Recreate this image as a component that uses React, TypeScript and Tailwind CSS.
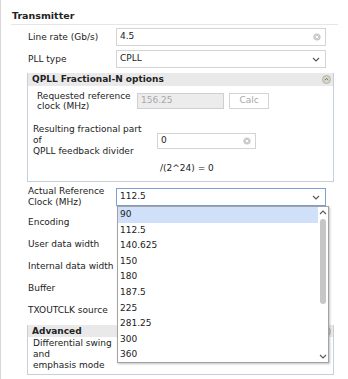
import React from 'react'

const FONT = "font-['DejaVu_Sans',_'Liberation_Sans',_sans-serif]"

const CLOCKS = ['90', '112.5', '140.625', '150', '180', '187.5', '225', '281.25', '300', '360']

function ClearIcon() {
  return (
    <svg width="8" height="8" viewBox="0 0 8 8">
      <circle cx="4" cy="4" r="3.6" fill="#c9c9c9" />
      <path d="M2.6 2.6 L5.4 5.4 M5.4 2.6 L2.6 5.4" stroke="#fff" strokeWidth="1" />
    </svg>
  )
}

function Chevron({ up = false }: { up?: boolean }) {
  return (
    <svg width="8" height="5" viewBox="0 0 8 5">
      <path d={up ? 'M1 4 L4 1 L7 4' : 'M1 1 L4 4 L7 1'} fill="none" stroke="#555" strokeWidth="1.1" />
    </svg>
  )
}

function CollapseIcon() {
  return (
    <svg width="9" height="9" viewBox="0 0 9 9">
      <circle cx="4.5" cy="4.5" r="4" fill="#d6d6cc" stroke="#a8a89c" strokeWidth="0.8" />
      <path d="M2.8 5.2 L4.5 3.4 L6.2 5.2" fill="none" stroke="#77776c" strokeWidth="1" />
    </svg>
  )
}

function Row({ label, children }: { label: React.ReactNode; children?: React.ReactNode }) {
  return (
    <div className="flex h-[18px] items-center">
      <div className="w-[89px] pl-[1px] leading-[11px]">{label}</div>
      {children}
    </div>
  )
}

function TextInput({ value }: { value: string }) {
  return (
    <div className="flex h-[18px] w-[210px] items-center justify-between border border-[#d4d4d4] bg-white pl-[3px] pr-[4px]">
      <span>{value}</span>
      <ClearIcon />
    </div>
  )
}

export default function App() {
  return (
    <div className={`relative h-[379px] w-[348px] overflow-hidden border-l border-[#d8d8d8] bg-white text-[9px] text-[#222] ${FONT}`}>
      {/* Section title */}
      <div className="mx-[10px] h-[25px] border-b border-[#e6e6e6] pl-[1px] pt-[10px] text-[9.5px] font-bold leading-[11px]">
        Transmitter
      </div>

      <div className="pl-[26px] pr-[14px]">
        <div className="mt-[3px] flex flex-col gap-[4px]">
          <Row label="Line rate (Gb/s)">
            <TextInput value="4.5" />
          </Row>
          <Row label="PLL type">
            <div className="flex h-[18px] w-[210px] items-center justify-between border border-[#d4d4d4] bg-white pl-[3px] pr-[5px]">
              <span>CPLL</span>
              <Chevron />
            </div>
          </Row>
        </div>

        {/* QPLL Fractional-N options */}
        <div className="mt-[5px] border-x border-b border-[#c7cfdb]">
          <div className="flex h-[13px] items-center justify-between bg-[#e9e9e9] pl-[4px] pr-[2px] font-bold leading-[11px]">
            <span>QPLL Fractional-N options</span>
            <CollapseIcon />
          </div>
          <div className="mt-[7px] flex h-[16px] items-center pl-[9px]">
            <div className="w-[100px] leading-[10px]">
              Requested reference
              <br />
              clock (MHz)
            </div>
            <div className="flex h-[16px] w-[87px] items-center border border-[#cfcfcf] bg-[#ececec] pl-[3px] text-[#a8a8a8]">
              156.25
            </div>
            <div className="ml-[5px] flex h-[16px] w-[40px] items-center justify-center border border-[#d4d4d4] bg-white text-[#a8a8a8]">
              Calc
            </div>
          </div>
          <div className="mt-[15px] flex items-center pl-[5px]">
            <div className="w-[124px] leading-[11px]">
              Resulting fractional part
              <br />
              of
              <br />
              QPLL feedback divider
            </div>
            <div className="flex h-[16px] w-[99px] items-center justify-between border border-[#d4d4d4] bg-white pl-[3px] pr-[4px]">
              <span>0</span>
              <ClearIcon />
            </div>
          </div>
          <div className="mt-[6px] pb-[7px] pl-[132px] leading-[11px]">/(2^24) = 0</div>
        </div>

        <div className="mt-[6px]">
          <Row
            label={
              <>
                Actual Reference
                <br />
                Clock (MHz)
              </>
            }
          >
            <div className="flex h-[18px] w-[210px] items-center justify-between border border-[#7c9fd6] bg-white pl-[3px] pr-[5px]">
              <span>112.5</span>
              <Chevron />
            </div>
          </Row>
        </div>

        {/* rows whose widgets sit behind the open list */}
        <div className="mt-[5px] flex flex-col">
          {['Encoding', 'User data width', 'Internal data width', 'Buffer', 'TXOUTCLK source'].map(l => (
            <div key={l} className="flex h-[22px] items-center pl-[1px] leading-[11px]">
              {l}
            </div>
          ))}
        </div>

        {/* Advanced */}
        <div className="mt-[4px] border-x border-b border-[#c7cfdb]">
          <div className="flex h-[12px] items-center justify-between bg-[#e9e9e9] pl-[4px] pr-[2px] font-bold leading-[11px]">
            <span>Advanced</span>
            <CollapseIcon />
          </div>
          <div className="pb-[3px] pl-[5px] pt-[1px] leading-[11px]">
            Differential swing
            <br />
            and
            <br />
            emphasis mode
          </div>
        </div>
      </div>

      {/* Open dropdown list */}
      <div className="absolute left-[116px] top-[206px] flex h-[157px] w-[212px] border border-[#a3a3a3] bg-white shadow-[1px_1px_2px_rgba(0,0,0,0.25)]">
        <div className="flex-1">
          {CLOCKS.map((c, i) => (
            <div
              key={c}
              className={`flex h-[15.6px] items-center pl-[2px] ${i === 0 ? 'bg-[#cfe0f8]' : ''}`}
            >
              {c}
            </div>
          ))}
        </div>
        <div className="flex w-[10px] flex-col items-center">
          <div className="mt-[3px]">
            <Chevron up />
          </div>
          <div className="mt-[4px] h-[85px] w-[6px] rounded-[3px] bg-[#c6c6c6]" />
          <div className="mt-auto mb-[3px]">
            <Chevron />
          </div>
        </div>
      </div>
    </div>
  )
}
